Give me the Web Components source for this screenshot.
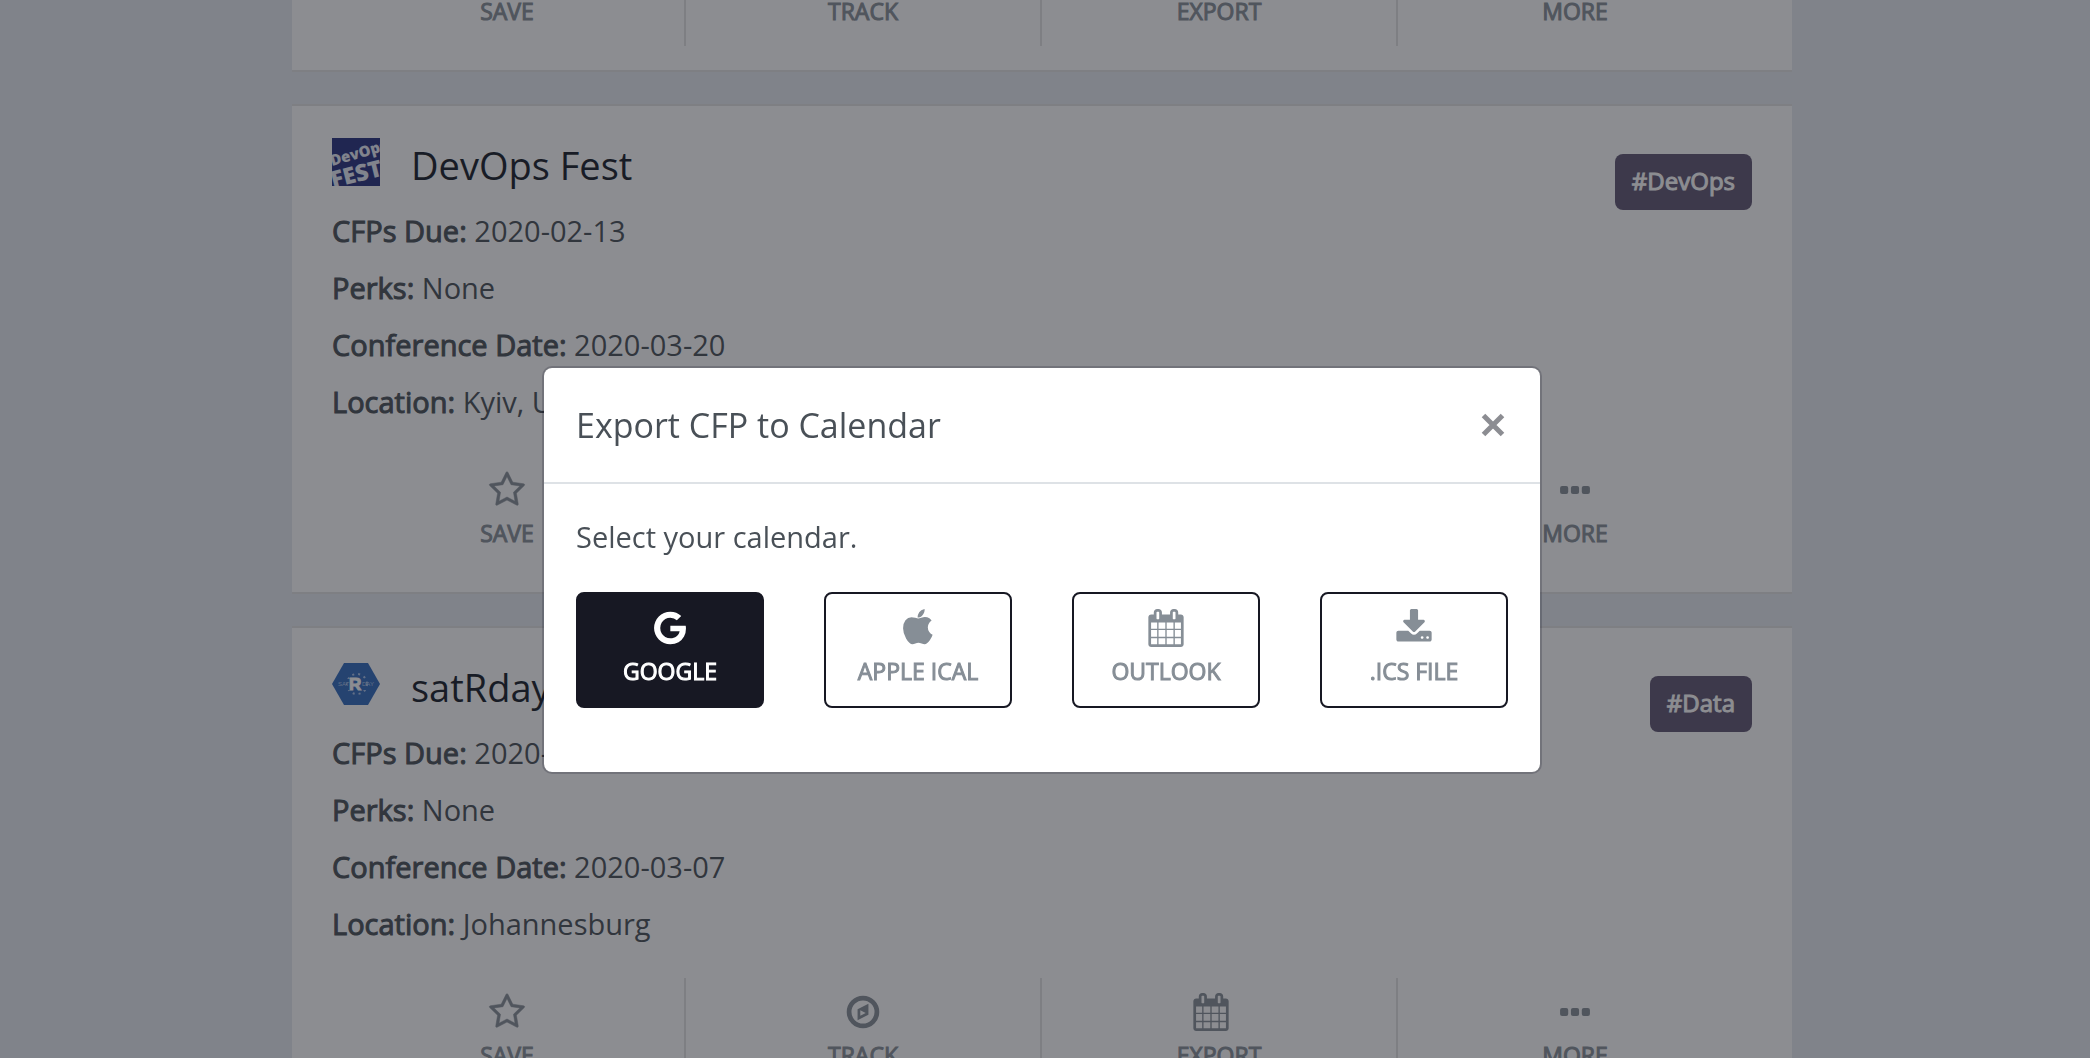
<!DOCTYPE html>
<html lang="en">
<head>
<meta charset="utf-8">
<meta name="viewport" content="width=device-width, initial-scale=1">
<title>Export CFP to Calendar</title>
<style>
  html, body { height: 100%; }
  body {
    margin: 0;
    overflow: hidden;
    background: #e6ebf1;
    color: #495057;
    font: 29px/46px "Open Sans", "Noto Sans", sans-serif;
  }
</style>
</head>
<body>
<cfp-list>
  <cfp-card></cfp-card>
  <cfp-card name="DevOps Fest" tag="#DevOps" due="2020-02-13" perks="None" date="2020-03-20" location="Kyiv, Ukraine">
    <devops-logo slot="logo"></devops-logo>
  </cfp-card>
  <cfp-card name="satRday" tag="#Data" due="2020-02-07" perks="None" date="2020-03-07" location="Johannesburg">
    <satrday-logo slot="logo"></satrday-logo>
  </cfp-card>
</cfp-list>

<export-modal heading="Export CFP to Calendar">
  <p slot="intro" style="margin:0">Select your calendar.</p>
  <icon-button boxed active icon="google">GOOGLE</icon-button>
  <icon-button boxed icon="apple">APPLE ICAL</icon-button>
  <icon-button boxed icon="calendar">OUTLOOK</icon-button>
  <icon-button boxed icon="download">.ICS FILE</icon-button>
</export-modal>

<script>
const ICONS = {
  star: ['0 0 1792 1792', '<path stroke="currentColor" stroke-width="24" d="M1201 1004l306-297-422-62-189-382-189 382-422 62 306 297-73 421 378-199 377 199zm527-357q0 22-26 48l-363 354 86 500q1 7 1 20 0 50-41 50-19 0-40-12l-449-236-449 236q-22 12-40 12-21 0-31.5-14.5t-10.5-35.5q0-6 2-20l86-500-364-354q-25-27-25-48 0-37 56-46l502-73 225-455q19-41 49-41t49 41l225 455 502 73q56 9 56 46z"/>'],
  compass: ['0 0 1792 1792', '<circle cx="896" cy="896" r="656" fill="none" stroke="currentColor" stroke-width="224"/><path fill-rule="evenodd" d="M1152 512v512l-512 256V768zM768 814v256l256-128z"/>'],
  calendar: ['0 0 1792 1792', '<path d="M192 1664h288v-288h-288v288zm352 0h320v-288h-320v288zm-352-352h288v-320h-288v320zm352 0h320v-320h-320v320zm-352-384h288v-288h-288v288zm736 736h320v-288h-320v288zm-384-736h320v-288h-320v288zm768 736h288v-288h-288v288zm-384-352h320v-320h-320v320zm-352-864v-288q0-13-9.5-22.5t-22.5-9.5h-64q-13 0-22.5 9.5t-9.5 22.5v288q0 13 9.5 22.5t22.5 9.5h64q13 0 22.5-9.5t9.5-22.5zm736 864h288v-320h-288v320zm-384-384h320v-288h-320v288zm384 0h288v-288h-288v288zm32-480v-288q0-13-9.5-22.5t-22.5-9.5h-64q-13 0-22.5 9.5t-9.5 22.5v288q0 13 9.5 22.5t22.5 9.5h64q13 0 22.5-9.5t9.5-22.5zm384-64v1280q0 52-38 90t-90 38h-1408q-52 0-90-38t-38-90v-1280q0-52 38-90t90-38h128v-96q0-66 47-113t113-47h64q66 0 113 47t47 113v96h384v-96q0-66 47-113t113-47h64q66 0 113 47t47 113v96h128q52 0 90 38t38 90z"/>'],
  more: ['0 0 1792 1792', '<rect x="192" y="704" width="384" height="384" rx="96"/><rect x="704" y="704" width="384" height="384" rx="96"/><rect x="1216" y="704" width="384" height="384" rx="96"/>'],
  google: ['-144 -36 1792 1792', '<path d="M768 750h725q12 67 12 128 0 217-91 387.5t-259.5 266.5-386.5 96q-157 0-299-60.5t-245-163.5-163.5-245-60.5-299 60.5-299 163.5-245 245-163.5 299-60.5q300 0 515 201l-209 201q-123-119-306-119-129 0-238.5 65t-173.5 176.5-64 243.5 64 243.5 173.5 176.5 238.5 65q87 0 160-24t120-60 82-82 51.5-87 22.5-78h-436v-264z"/>'],
  apple: ['0 0 1792 1792', '<path d="M1585 1215q-39 125-123 250-129 196-257 196-49 0-140-32-86-32-151-32-61 0-142 33-81 34-132 34-152 0-301-259-147-261-147-503 0-228 113-374 113-144 284-144 72 0 177 30 104 30 138 30 45 0 143-34 102-34 173-34 119 0 213 65 52 36 104 100-79 67-114 118-65 94-65 207 0 124 69 223t158 126zm-376-1173q0 61-29 136-30 75-93 138-54 54-108 72-37 11-104 17 3-149 78-257 74-107 250-148 1 3 2.5 11t2.5 11q0 4 .5 10t.5 10z"/>'],
  download: ['0 0 1792 1792', '<path d="M1344 1344q0-26-19-45t-45-19-45 19-19 45 19 45 45 19 45-19 19-45zm256 0q0-26-19-45t-45-19-45 19-19 45 19 45 45 19 45-19 19-45zm128-224v320q0 40-28 68t-68 28h-1472q-40 0-68-28t-28-68v-320q0-40 28-68t68-28h465l135 136q58 56 136 56t136-56l136-136h464q40 0 68 28t28 68zm-325-569q17 41-14 70l-448 448q-18 19-45 19t-45-19l-448-448q-31-29-14-70 17-39 59-39h256v-448q0-26 19-45t45-19h256q26 0 45 19t19 45v448h256q42 0 59 39z"/>']
};

class ShadowElement extends HTMLElement {
  connectedCallback() {
    if (!this.shadowRoot) this.attachShadow({ mode: 'open' }).innerHTML = this.render();
  }
}

class IconButton extends ShadowElement {
  render() {
    const [box, shape] = ICONS[this.getAttribute('icon')];
    return `<style>
      :host { display: block; }
      button {
        box-sizing: border-box; width: 100%; height: 112px; margin: 0; padding: 14px 0 16px;
        display: flex; flex-direction: column; align-items: center; gap: 5px;
        border: 0; background: none; color: #868e96; font: inherit;
        font-size: 23px; line-height: 36px; white-space: nowrap; cursor: pointer;
      }
      :host([boxed]) button { height: 116px; border: 2px solid #171823; border-radius: 8px; background: #fff; }
      :host([active]) button { background: #171823; color: #fff; }
      .icon { height: 40px; display: flex; align-items: center; padding-right: var(--icon-trail, 0); }
      svg { width: 38px; height: 38px; fill: currentColor; overflow: visible; }
      .label { -webkit-text-stroke: 1px currentColor; }
    </style>
    <button type="button">
      <span class="icon"><svg viewBox="${box}" aria-hidden="true">${shape}</svg></span>
      <span class="label"><slot></slot></span>
    </button>`;
  }
}

class DevopsLogo extends ShadowElement {
  render() {
    return `<style>:host, svg { display: block; width: 48px; height: 48px; }</style>
    <svg viewBox="0 0 48 48" role="img" aria-label="DevOps Fest logo">
      <rect width="48" height="48" fill="#26307e"/>
      <g fill="#e8ecf6" font-family="Open Sans, sans-serif" font-weight="800">
        <text transform="translate(0 28) rotate(-16)" font-size="15">DevOps</text>
        <text transform="translate(1 50) rotate(-14)" font-size="23">FEST</text>
      </g>
    </svg>`;
  }
}

class SatrdayLogo extends ShadowElement {
  render() {
    return `<style>:host, svg { display: block; width: 48px; height: 48px; }</style>
    <svg viewBox="0 0 48 48" role="img" aria-label="satRday logo">
      <path d="M12 3h24l12 21-12 21H12L0 24z" fill="#316abc"/>
      <circle cx="25" cy="24" r="10" fill="none" stroke="#a9c3ea" stroke-width="2" stroke-dasharray="2 4"/>
      <path d="M15 19h19v11H15z" fill="#316abc"/>
      <g fill="#a9c3ea" font-family="Liberation Sans Narrow, Liberation Sans, sans-serif" font-size="6">
        <text x="6" y="26">SAT</text>
        <text x="30" y="26">DAY</text>
      </g>
      <text x="17" y="30" font-family="Liberation Sans, sans-serif" font-weight="700" font-size="17" fill="#fff" stroke="#fff">R</text>
    </svg>`;
  }
}

class CfpCard extends ShadowElement {
  render() {
    const get = n => this.getAttribute(n);
    const row = (label, value) => `<p><b>${label}:</b> ${value}</p>`;
    const info = get('name') ? `<div class="info">
        <div class="text">
          <header><slot name="logo"></slot><h2>${get('name')}</h2></header>
          ${row('CFPs Due', get('due'))}
          ${row('Perks', get('perks'))}
          ${row('Conference Date', get('date'))}
          ${row('Location', get('location'))}
        </div>
        <a class="tag" href="#tag">${get('tag')}</a>
      </div>` : '';
    return `<style>
      :host {
        display: block; box-sizing: border-box; padding: 32px 40px 24px;
        border: solid rgba(0, 0, 0, .11); border-width: 2px 0; background: #fff;
      }
      .info { display: flex; align-items: flex-start; justify-content: space-between; }
      header { display: flex; align-items: flex-start; gap: 31px; margin-bottom: 16px; }
      h2 { margin: 0; font-size: 38px; line-height: 54px; font-weight: 400; color: #171d29; }
      p { margin: 0 0 11px; }
      b { font-weight: 400; -webkit-text-stroke: 1px currentColor; }
      .tag {
        margin-top: 16px; padding: 9px 17px 11px; border-radius: 8px; background: #615773; color: #fff;
        font-size: 24px; line-height: 36px; text-decoration: none; -webkit-text-stroke: 1px currentColor;
      }
      nav { display: grid; grid-template-columns: repeat(4, 1fr); margin: 20px -2px 0; }
      icon-button { border-right: 2px solid rgba(0, 0, 0, .11); }
      icon-button:last-child { border-color: transparent; }
      icon-button[icon="calendar"] { --icon-trail: 16px; }
    </style>
    ${info}
    <nav>
      <icon-button icon="star">SAVE</icon-button>
      <icon-button icon="compass">TRACK</icon-button>
      <icon-button icon="calendar">EXPORT</icon-button>
      <icon-button icon="more">MORE</icon-button>
    </nav>`;
  }
}

/* The list sits partly above the window, as when scrolled behind the open modal. */
class CfpList extends ShadowElement {
  render() {
    return `<style>
      :host { display: block; padding-right: 6px; }
      main { display: flex; flex-direction: column; gap: 32px; max-width: 1500px; margin: -120px auto 0; }
    </style>
    <main><slot></slot></main>`;
  }
}

class ExportModal extends ShadowElement {
  render() {
    return `<style>
      :host {
        position: fixed; inset: 0; box-sizing: border-box; padding: 366px 6px 0 0;
        background: rgba(25, 27, 35, .5);
      }
      section {
        box-sizing: border-box; max-width: 1000px; margin: 0 auto; background: #fff; background-clip: padding-box;
        border: 2px solid rgba(0, 0, 20, .18); border-radius: 10px;
      }
      header {
        display: flex; align-items: center; justify-content: space-between;
        padding: 32px; border-bottom: 2px solid #dee2e6;
      }
      h1 { margin: 0; font-size: 34px; line-height: 50px; font-weight: 400; }
      .close { display: flex; margin: 0; padding: 3px; border: 0; background: none; color: #8c8d92; cursor: pointer; }
      .body { padding: 30px 32px 64px; display: flex; flex-direction: column; gap: 32px; }
      .choices { display: grid; grid-template-columns: repeat(4, 1fr); gap: 60px; }
    </style>
    <section role="dialog" aria-modal="true" aria-labelledby="heading">
      <header>
        <h1 id="heading">${this.getAttribute('heading')}</h1>
        <button class="close" type="button" aria-label="Close">
          <svg width="24" height="24" viewBox="0 0 24 24" fill="none" stroke="currentColor" stroke-width="5"><path d="M2.500 2.500l19 19M21.500 2.500l-19 19"/></svg>
        </button>
      </header>
      <div class="body">
        <slot name="intro"></slot>
        <div class="choices"><slot></slot></div>
      </div>
    </section>`;
  }
}

customElements.define('icon-button', IconButton);
customElements.define('devops-logo', DevopsLogo);
customElements.define('satrday-logo', SatrdayLogo);
customElements.define('cfp-card', CfpCard);
customElements.define('cfp-list', CfpList);
customElements.define('export-modal', ExportModal);
</script>
</body>
</html>
